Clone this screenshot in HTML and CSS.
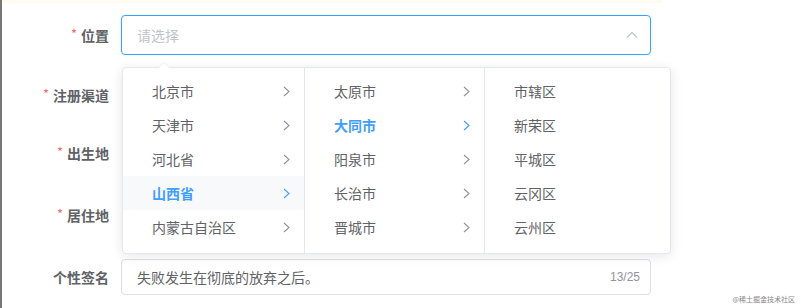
FILE: index.html
```html
<!DOCTYPE html>
<html lang="zh">
<head>
<meta charset="utf-8">
<link rel="stylesheet" href="styles.css">
</head>
<body>
<div class="page">
  <div class="topband"></div>
  <form class="form">
    <div class="row row-1">
      <label class="label"><span class="star">*</span>位置</label>
      <div class="select is-focus">
        <span class="placeholder">请选择</span>
        <svg class="up" width="12" height="8" viewBox="0 0 12 8"><polyline points="1,6.5 6,1.5 11,6.5" fill="none" stroke="#c0c4cc" stroke-width="1.3"/></svg>
      </div>
    </div>
    <div class="row row-2">
      <label class="label"><span class="star">*</span>注册渠道</label>
    </div>
    <div class="row row-3">
      <label class="label"><span class="star">*</span>出生地</label>
    </div>
    <div class="row row-4">
      <label class="label"><span class="star">*</span>居住地</label>
    </div>
    <div class="row row-5">
      <label class="label">个性签名</label>
      <div class="input">
        <span class="value">失败发生在彻底的放弃之后。</span>
        <span class="count">13/25</span>
      </div>
    </div>

    <div class="cascader">
      <div class="arrow"></div>
      <ul class="menu menu-1">
        <li class="item">北京市<svg class="chev" width="7" height="11" viewBox="0 0 7 11"><polyline points="1,1 6,5.5 1,10" fill="none" stroke="currentColor" stroke-width="1.1"/></svg></li>
        <li class="item">天津市<svg class="chev" width="7" height="11" viewBox="0 0 7 11"><polyline points="1,1 6,5.5 1,10" fill="none" stroke="currentColor" stroke-width="1.1"/></svg></li>
        <li class="item">河北省<svg class="chev" width="7" height="11" viewBox="0 0 7 11"><polyline points="1,1 6,5.5 1,10" fill="none" stroke="currentColor" stroke-width="1.1"/></svg></li>
        <li class="item active hover">山西省<svg class="chev" width="7" height="11" viewBox="0 0 7 11"><polyline points="1,1 6,5.5 1,10" fill="none" stroke="currentColor" stroke-width="1.1"/></svg></li>
        <li class="item">内蒙古自治区<svg class="chev" width="7" height="11" viewBox="0 0 7 11"><polyline points="1,1 6,5.5 1,10" fill="none" stroke="currentColor" stroke-width="1.1"/></svg></li>
      </ul>
      <ul class="menu menu-2">
        <li class="item">太原市<svg class="chev" width="7" height="11" viewBox="0 0 7 11"><polyline points="1,1 6,5.5 1,10" fill="none" stroke="currentColor" stroke-width="1.1"/></svg></li>
        <li class="item active">大同市<svg class="chev" width="7" height="11" viewBox="0 0 7 11"><polyline points="1,1 6,5.5 1,10" fill="none" stroke="currentColor" stroke-width="1.1"/></svg></li>
        <li class="item">阳泉市<svg class="chev" width="7" height="11" viewBox="0 0 7 11"><polyline points="1,1 6,5.5 1,10" fill="none" stroke="currentColor" stroke-width="1.1"/></svg></li>
        <li class="item">长治市<svg class="chev" width="7" height="11" viewBox="0 0 7 11"><polyline points="1,1 6,5.5 1,10" fill="none" stroke="currentColor" stroke-width="1.1"/></svg></li>
        <li class="item">晋城市<svg class="chev" width="7" height="11" viewBox="0 0 7 11"><polyline points="1,1 6,5.5 1,10" fill="none" stroke="currentColor" stroke-width="1.1"/></svg></li>
      </ul>
      <ul class="menu menu-3">
        <li class="item">市辖区</li>
        <li class="item">新荣区</li>
        <li class="item">平城区</li>
        <li class="item">云冈区</li>
        <li class="item">云州区</li>
      </ul>
    </div>
  </form>
  <div class="watermark">@稀土掘金技术社区</div>
</div>
</body>
</html>
```

FILE: styles.css
```css
* { box-sizing: border-box; }
html, body { margin: 0; padding: 0; background: #fff; }
body {
  font-family: "Noto Sans CJK SC", "Liberation Sans", sans-serif;
  font-size: 14px;
  color: #606266;
}
.page {
  position: relative;
  width: 801px;
  height: 308px;
  border-left: 2px solid #777;
  overflow: hidden;
}
.topband {
  height: 3px;
  background: #fffbf0;
  width: 660px;
}
.form {
  position: relative;
  margin: 0;
  padding-top: 12px;
}
.row {
  display: flex;
  align-items: center;
  height: 40px;
}
.row-2 { margin-top: 20px; }
.row-3 { margin-top: 18px; }
.row-4 { margin-top: 22px; }
.row-5 { margin-top: 24px; height: 36px; }
.label {
  width: 107px;
  text-align: right;
  font-weight: 700;
  color: #606266;
  font-size: 14px;
  flex: none;
}
.star {
  color: #f56c6c;
  font-weight: 400;
  margin-right: 4px;
  font-size: 13px;
  position: relative;
  top: -2px;
}
.select, .input {
  margin-left: 12px;
  width: 530px;
  display: flex;
  align-items: center;
  border: 1px solid #dcdfe6;
  border-radius: 4px;
  padding: 0 12px 0 15px;
}
.select {
  height: 40px;
}
.select.is-focus {
  border-color: #409eff;
  box-shadow: 0 0 2px rgba(100, 220, 255, 0.35);
}
.placeholder { color: #c0c4cc; flex: 1; }
.input { height: 36px; padding-right: 10px; }
.value { flex: 1; color: #606266; }
.count {
  font-family: "Liberation Sans", sans-serif;
  font-size: 12px;
  color: #909399;
}
.cascader {
  position: absolute;
  left: 120px;
  top: 64px;
  display: flex;
  background: #fff;
  border: 1px solid #e4e7ed;
  border-radius: 4px;
  box-shadow: 0 2px 12px 0 rgba(0, 0, 0, 0.1);
}
.arrow {
  position: absolute;
  top: -6px;
  left: 35px;
  width: 0;
  height: 0;
  border: 6px solid transparent;
  border-top-width: 0;
  border-bottom-color: #ebeef5;
}
.arrow::after {
  content: "";
  position: absolute;
  top: 1px;
  left: -6px;
  border: 6px solid transparent;
  border-top-width: 0;
  border-bottom-color: #fff;
}
.menu {
  list-style: none;
  margin: 0;
  padding: 6px 0;
  height: 185px;
  overflow: hidden;
  border-right: 1px solid #e4e7ed;
}
.menu-1 { width: 182px; }
.menu-2 { width: 180px; }
.menu-3 { width: 185px; border-right: none; }
.item {
  display: flex;
  align-items: center;
  height: 34px;
  padding: 0 14px 0 29px;
  color: #606266;
  white-space: nowrap;
}
.chev { margin-left: auto; color: #909399; }
.item.active { color: #409eff; font-weight: 700; }
.item.active .chev { color: #409eff; }
.item.hover { background: #f8f9fb; }
.watermark {
  position: absolute;
  right: 6px;
  bottom: 4px;
  font-size: 7px;
  color: #888;
}
```
